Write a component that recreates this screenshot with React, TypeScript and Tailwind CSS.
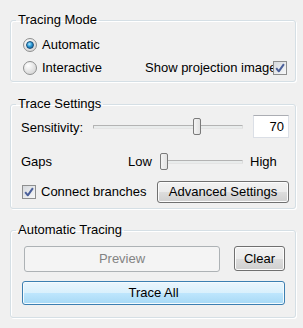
import React from "react";

function Radio({ checked }: { checked?: boolean }) {
  return (
    <span className="flex h-[14px] w-[14px] shrink-0 items-center justify-center rounded-full border border-[#8e8f8f] bg-[radial-gradient(circle_at_35%_30%,#ffffff,#e2e2e2_55%,#cfcfcf)]">
      {checked && (
        <span className="h-[8px] w-[8px] rounded-full border border-[#1b4f7a] bg-[radial-gradient(circle_at_40%_35%,#b6ecff,#2a9ad8_45%,#0c4b80)]" />
      )}
    </span>
  );
}

function Check() {
  return (
    <span className="flex h-[14px] w-[14px] shrink-0 items-center justify-center border border-[#8e8f8f] bg-[linear-gradient(135deg,#d6d9dd,#f7f8f9)]">
      <svg width="10" height="10" viewBox="0 0 10 10">
        <path d="M1.2 5.2 L3.8 8.3 L8.9 1.2" stroke="#4a5f9a" strokeWidth="2" fill="none" strokeLinejoin="round" />
      </svg>
    </span>
  );
}

function Slider({ wClass, leftClass }: { wClass: string; leftClass: string }) {
  return (
    <div className={`relative h-[17px] shrink-0 ${wClass}`}>
      <div className="absolute left-0 right-0 top-[7px] h-[4px] rounded-[1px] border border-[#b3b3b3] border-b-[#e4e4e4] border-r-[#dcdcdc] bg-[#e9ecec]" />
      <div className={`absolute top-0 h-[17px] w-[8px] rounded-[2px] border border-[#7a7a7a] bg-[linear-gradient(90deg,#f4f4f4,#e2e2e2)] ${leftClass}`} />
    </div>
  );
}

function Group({ title, children, className }: { title: string; children: React.ReactNode; className?: string }) {
  return (
    <fieldset className={`w-[286px] rounded-[3px] border border-[#d5dfe5] shadow-[inset_1px_1px_0_#ffffff,1px_1px_0_#ffffff] ${className ?? ""}`}>
      <legend className="ml-[5px] px-[2px] text-[13px] leading-[16px]">{title}</legend>
      {children}
    </fieldset>
  );
}

export default function App() {
  return (
    <div className="flex h-[328px] w-[303px] flex-col bg-[#f0f0f0] pl-[10px] pt-[12px] font-['Liberation_Sans',Arial,sans-serif] text-[13px] leading-[16px] text-black">
      <Group title="Tracing Mode">
        <div className="flex flex-col gap-[3px] pb-[3px] pl-[12px] pt-[7px]">
          <div className="flex h-[20px] items-center">
            <Radio checked />
            <span className="ml-[5px]">Automatic</span>
          </div>
          <div className="flex h-[20px] items-center">
            <div className="flex w-[122px] items-center">
              <Radio />
              <span className="ml-[5px]">Interactive</span>
            </div>
            <span className="w-[128px] whitespace-nowrap">Show projection image</span>
            <Check />
          </div>
        </div>
      </Group>

      <Group title="Trace Settings" className="mt-[14px]">
        <div className="flex flex-col pb-[5px] pl-[10px] pr-[6px] pt-[3px]">
          <div className="flex h-[23px] items-center">
            <span className="w-[72px] pt-[2px]">Sensitivity:</span>
            <Slider wClass="w-[150px]" leftClass="left-[100px]" />
            <div className="ml-[10px] flex h-[23px] w-[36px] items-center justify-end border border-[#dbdfe6] border-t-[#abadb3] bg-white pr-[4px]">
              70
            </div>
          </div>
          <div className="mt-[15px] flex h-[17px] items-center">
            <span className="w-[107px]">Gaps</span>
            <span className="w-[32px]">Low</span>
            <Slider wClass="w-[83px]" leftClass="left-0" />
            <span className="ml-[7px]">High</span>
          </div>
          <div className="mt-[11px] flex h-[22px] items-center">
            <span className="ml-[1px]">
              <Check />
            </span>
            <span className="ml-[5px]">Connect branches</span>
            <button className="ml-auto h-[22px] w-[132px] rounded-[3px] border border-[#707070] bg-[linear-gradient(#f2f2f2_0%,#ebebeb_50%,#dddddd_50%,#cfcfcf_100%)] shadow-[inset_0_0_0_1px_#fcfcfc] text-[13px]">
              Advanced Settings
            </button>
          </div>
        </div>
      </Group>

      <Group title="Automatic Tracing" className="mt-[13px]">
        <div className="flex flex-col pb-[12px] pl-[11px] pt-[8px]">
          <div className="flex h-[25px] items-center">
            <button className="ml-[2px] h-[26px] w-[196px] rounded-[3px] border border-[#adb2b5] bg-[#f4f4f4] text-[13px] text-[#838383]">
              Preview
            </button>
            <button className="ml-[14px] h-[25px] w-[51px] rounded-[3px] border border-[#707070] bg-[linear-gradient(#f2f2f2_0%,#ebebeb_50%,#dddddd_50%,#cfcfcf_100%)] shadow-[inset_0_0_0_1px_#fcfcfc] text-[13px]">
              Clear
            </button>
          </div>
          <button className="mt-[10px] h-[24px] w-[263px] rounded-[3px] border border-[#3c7fb1] bg-[linear-gradient(#eaf6fd_0%,#d9f0fc_50%,#bee6fd_50%,#a7d9f5_100%)] shadow-[inset_0_0_0_1px_#f4fbfe] text-[13px]">
            Trace All
          </button>
        </div>
      </Group>
    </div>
  );
}
